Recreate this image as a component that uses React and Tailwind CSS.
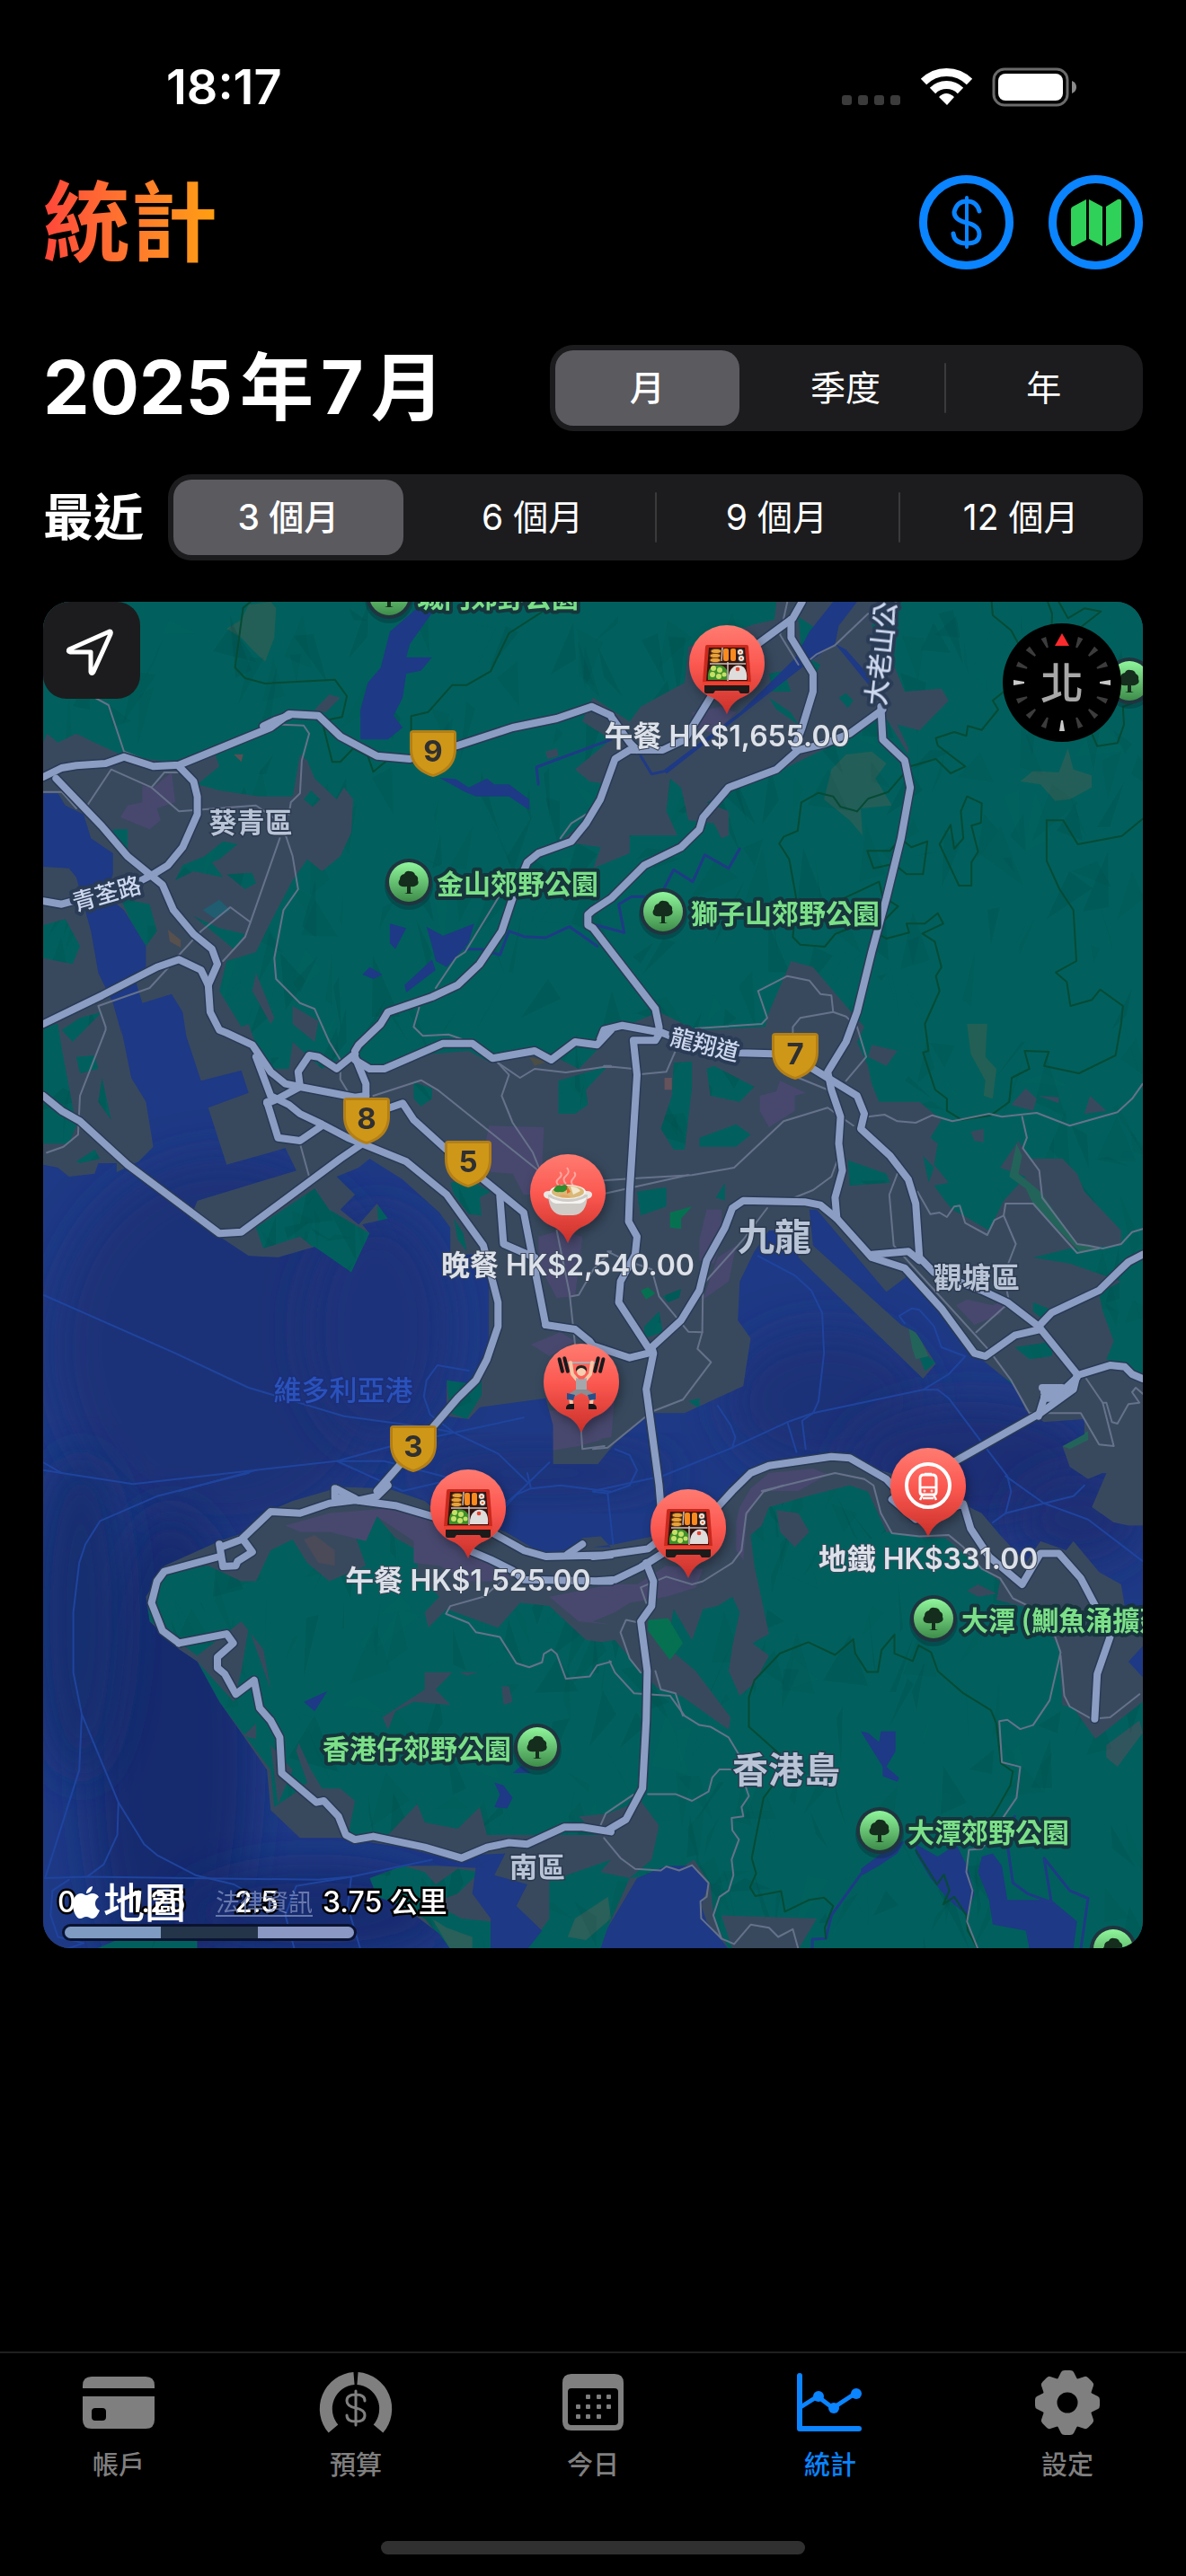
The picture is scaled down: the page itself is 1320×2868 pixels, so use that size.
import React, { useState } from "react";

/* ---------- map geometry ---------- */

// Each survey sheet has its own origin and scale; points are written in sheet units.
const SHEETS = {
  nw: [40, 660, 2.45, 3],
  ne: [660, 660, 2.45, 3],
  w: [40, 1140, 2.45, 3],
  e: [660, 1140, 2.45, 3],
  sw: [40, 1640, 2.45, 2.904],
  se: [660, 1640, 2.45, 2.904],
};

function trace(spec) {
  let sheet = SHEETS.nw;
  return spec
    .trim()
    .split(/\s+/)
    .map((token) => {
      if (SHEETS[token]) {
        sheet = SHEETS[token];
        return null;
      }
      const [x, y] = token.split(",").map(Number);
      return `${Math.round((sheet[0] + x / sheet[2]) * 10) / 10},${Math.round((sheet[1] + y / sheet[3]) * 10) / 10}`;
    })
    .filter(Boolean)
    .join(" ");
}

const HILLS = [
  "nw 20,30 ne 500,30 495,90 440,105 260,180 250,300 130,380 100,430 0,350 nw 1510,370 1490,430 1568,490 1470,590 1510,630 1560,640 1500,760 1430,830 1540,850 1520,920 ne 0,920 100,870 100,810 230,810 200,730 210,620 240,650 260,760 330,770 350,820 370,810 370,730 310,700 400,650 500,600 600,540 700,480 790,400 860,540 860,520 830,440 890,460 970,360 950,320 850,330 820,240 790,190 760,110 800,30 1499,30 e 1499,1180 1400,1120 1420,1060 1390,960 1380,900 1440,860 1300,800 1200,780 1300,750 1440,740 1440,690 1340,560 1320,500 1280,450 1190,450 1160,390 1110,480 1180,510 1120,590 1080,690 1010,640 980,620 960,590 930,540 970,530 930,470 940,400 920,380 950,320 890,260 780,260 760,200 750,140 720,60 ne 740,1450 690,1380 600,1250 540,1230 480,1400 470,1450 280,1460 180,1400 e 0,50 w 1568,40 1480,150 1400,100 1340,100 1240,130 1180,90 1080,100 960,150 900,150 870,90 780,150 700,60 690,150 640,150 600,70 580,0 nw 560,1450 500,1330 520,1230 600,1200 640,1100 700,960 740,890 780,930 830,880 860,800 865,690 840,650 820,690 760,620 740,560 720,540 700,680 610,680 500,660 440,640 500,580 470,470 530,430 600,440 640,450 680,410 400,570 240,545 160,500 110,470 60,500 30,470 20,500",
  "sw 300,470 310,400 350,320 470,300 560,350 600,350 640,250 700,215 740,290 800,350 900,300 870,200 930,140 980,210 1040,250 1040,330 1100,400 1060,450 1070,500 1120,440 1260,500 1320,420 1400,430 1500,540 1568,550 se 0,550 60,540 130,640 180,700 240,720 370,830 375,790 280,640 200,560 220,440 270,540 300,440 340,430 380,400 400,450 380,560 370,640 400,720 440,680 480,590 435,550 480,520 440,300 430,200 460,170 480,110 600,70 700,40 750,60 800,190 900,210 960,210 1050,300 1110,350 1100,410 1200,440 1270,560 1280,750 1310,760 1370,860 1499,740 1499,1540 370,1540 330,1440 320,1330 270,1240 290,1240 220,1290 100,1310 160,1250 180,1140 130,1060 20,1110 sw 1568,1100 1480,1110 1530,1170 1230,1170 1210,1080 1150,1150 1060,1130 1040,1070 960,1170 850,1180 870,1060 830,1020 780,1020 750,960 700,830 740,760 710,900 740,1000 700,1040 650,1080 640,960 500,740 440,610 540,740 560,640 580,500 640,700 620,570 560,480 440,590",
  "nw 20,1110 80,1090 120,1180 100,1240 20,1220",
  "w 20,10 60,0 70,80 110,340 90,400 20,400",
  "w 110,110 160,105 170,150 120,165",
  "w 180,180 205,320 170,260",
  "w 110,460 160,420 175,450 120,465",
  "w 760,550 800,620 910,700 860,830 760,750 720,710 620,750 600,680",
  "w 930,605 965,650 935,685",
  "w 1130,530 1180,520 1240,560 1210,580 1215,640 1180,635 1140,570",
  "w 1140,650 1165,700 1175,760 1150,720",
  "w 1120,1190 1215,1185 1215,1240 1175,1320 1130,1300",
  "w 1030,195 1080,215 1080,250 1050,275 1030,250",
  "w 1425,190 1560,140 1500,220 1505,270 1470,300 1425,300",
  "nw 510,830 550,840 500,890 480,900 510,950 430,930 380,960 400,910 460,880",
  "nw 520,940 590,935 600,970 570,990",
  "nw 730,690 750,660 775,690 755,715",
  "nw 430,1080 500,1120 570,1140 540,1190 500,1150",
  "nw 230,1020 310,1040 330,1130 300,1180 260,1100",
  "nw 70,1460 120,1420 180,1400 100,1500",
  "nw 210,790 250,790 250,860 220,850",
  "ne 480,350 540,400 560,440 500,390",
  "ne 670,350 690,335 710,360 695,385",
  "ne 560,80 610,120 560,200 620,240 600,290 570,220",
  "ne 480,270 520,260 540,330 490,330",
  "e 220,130 270,125 270,210 250,420 220,420 185,350 215,240",
  "e 310,150 330,140 440,210 400,260 320,240",
  "e 290,380 390,335 430,370 390,410 290,410",
  "e 120,560 200,545 200,610 130,640",
  "e 335,580 360,530 360,590",
  "e 695,455 800,500 810,530 700,540",
  "e 140,1010 180,960 190,1030 140,1050",
  "e 190,910 240,885 235,915 205,930",
  "e 260,1260 290,1250 290,1285",
  "e 900,440 930,480 915,530",
  "e 1200,930 1260,960 1240,1000 1200,960",
  "e 1150,1080 1260,1060 1250,1110 1190,1120",
  "e 1100,1170 1150,1200 1110,1200",
  "e 880,1080 935,1130 905,1160",
  "sw 185,240 190,200 220,165 265,190 270,215 230,240",
  "sw 910,1310 1000,1270 1060,1290 1090,1330 1150,1280 1210,1290 1150,1360 1080,1390 1160,1440 1240,1450 1240,1540 1130,1540 1060,1440 930,1370",
  "sw 1400,1320 1568,1250 se 20,1290 100,1310 40,1470 20,1540 sw 1340,1540 1400,1440",
  "sw 160,1540 190,1510 300,1470 440,1490 440,1540",
];

const WATERS = [
  "w 20,470 60,480 90,510 160,500 170,465 220,465 220,495 280,460 320,410 300,260 260,180 230,0 nw 235,1480 210,1370 170,1270 150,1130 110,950 90,920 20,915 20,670 60,670 80,710 130,740 150,820 210,870 210,940 190,1010 240,1060 300,1180 300,1250 270,1290 290,1370 370,1340 400,1400 410,1480 w 450,190 560,155 580,230 470,280 520,470 680,415 710,490 440,590 420,650 500,710 580,775 660,780 760,745 860,830 910,700 890,670 960,650 930,600 880,670 830,620 870,570 820,510 880,480 910,450 1000,520 1100,630 1130,680 1130,770 1235,770 1235,1080 1180,1200 1120,1190 1120,1310 1180,1320 1210,1280 1390,1250 1410,1340 1410,1470 1550,1470 e 0,1490 60,1400 160,1300 250,1300 410,1210 430,1050 395,990 400,860 440,760 480,690 560,690 560,780 900,1185 935,1135 880,1030 840,1005 600,740 590,620 610,620 800,895 860,840 900,900 1000,1010 1070,1130 1150,1210 1180,1290 1230,1330 1340,1320 1340,1370 1280,1410 1300,1480 1350,1520 1390,1500 se 1400,0 1360,110 1420,160 1460,170 1499,170 1499,430 1450,430 1440,360 1380,320 1310,220 1290,250 1220,220 1180,290 1110,200 1060,130 1010,100 e 1000,1590 810,1500 650,1440 500,1470 430,1500 380,1570 se 340,90 180,200 60,230 0,240 sw 1568,240 1540,205 1490,210 1470,245 1380,260 1280,190 1080,110 1060,90 960,50 830,45 700,90 620,130 600,180 500,220 350,300 300,400 310,480 390,570 440,610 500,740 560,840 630,960 640,1090 720,1180 830,1180 1000,1210 1100,1240 1280,1230 1240,1280 1100,1270 1000,1270 910,1310 930,1370 1000,1400 1100,1490 1130,1540 440,1540 440,1490 300,1470 160,1540 20,1540",
  "sw 1200,1270 1280,1230 1250,1300 1340,1330 1310,1400 1380,1480 1340,1540 1240,1540 1240,1440 1190,1360",
  "se 20,1540 40,1470 80,1390 120,1310 200,1270 270,1270 315,1330 295,1400 310,1450 370,1540",
  "se 1060,1240 1090,1230 1115,1270 1130,1380 1250,1380 1320,1450 1310,1540 1190,1540 1180,1480 1090,1460 1080,1380 1050,1290",
  "se 880,1200 940,1240 990,1200 1020,1270 1040,1360 1020,1430 970,1380 920,1310 880,1230",
  "se 730,835 750,840 780,870 785,835 825,835 825,900 800,950 835,985 830,998 790,980 790,950",
  "se 730,1280 820,1200 850,1190 830,1230 780,1270 735,1300",
  "se 1499,560 1460,610 1499,660",
  "nw 1040,50 1090,50 1020,170 1010,215 1080,215 1050,260 1010,270 1000,350 975,410 1000,450 960,490 885,490 885,390 905,300 940,250 965,130",
  "nw 1100,618 1145,622 1180,650 1230,620 1250,640 1290,640 1345,690 1345,725 1290,680 1200,680 1170,665",
  "nw 965,1105 1010,1120 980,1190 965,1170",
  "nw 1065,1115 1110,1145 1195,1105 1180,1170 1120,1250 1090,1230 1080,1180",
  "nw 1080,1225 1090,1260 1010,1335 1005,1310",
  "nw 890,1275 910,1250 945,1275 920,1290",
  "ne 655,30 720,30 670,110 660,170 590,230 200,605 195,590 400,400 550,220 590,130",
  "ne 660,170 690,190 770,300 760,320",
  "sw 730,740 795,705 760,770",
  "sw 1250,1000 1275,1010 1300,1050 1285,1085 1250,1080 1265,1040",
  "sw 1300,970 1325,945 1350,970",
];

const PURPLES = [
  "nw 290,645 320,650 370,600 380,700 330,720 340,760 310,790 230,750 250,710 290,700",
  "w 1235,340 1385,345 1380,480 1370,570 1330,570 1300,500 1240,495 1220,440",
  "w 1370,710 1430,690 1490,710 1470,910 1420,915 1370,800",
  "w 1350,1070 1430,1030 1470,1060 1400,1110",
  "w 1390,1290 1568,1300 1540,1390 1480,1410 1430,1420 1340,1440 1345,1425 1410,1400",
  "e 455,240 500,225 510,190 580,230 550,240 550,290 480,345 455,290",
  "e 310,620 350,620 350,720 330,800 290,790 290,720",
  "e 340,780 390,740 370,860 300,920",
  "e 0,1300 60,1230 50,1380 0,1390",
  "e 480,1500 600,1485 640,1505 560,1560 430,1560",
  "e 990,940 1020,920 1090,940 1130,920 1110,970 1040,1005",
  "sw 680,170 800,130 1000,110 1080,150 1200,270 1300,340 1250,350 1180,350 1100,300 1030,290 1030,220 930,140 900,220 800,190 720,190",
  "sw 1400,400 1568,360 se 120,360 200,300 300,310 280,370 200,400 100,420 60,450 0,480 sw 1568,490 1480,480",
  "se 390,160 400,110 430,50 480,0 640,0 460,60 420,140 410,280 390,250",
  "ne 270,400 350,380 390,400 330,470 280,450",
];

const BROWNS = [
  ["nw 580,40 640,30 655,50 650,150 625,230 590,190 560,150 520,120 560,90", "#235f56"],
  ["ne 690,540 760,530 800,570 770,620 815,710 730,720 735,810 700,760 630,690 650,590", "#235f58"],
  ["ne 1295,520 1310,590 1360,610 1360,650 1300,690 1260,695 1220,640 1165,630 1200,595 1270,600", "#235f58"],
  ["e 1020,0 1075,0 1070,110 1100,150 1090,250 1065,240 1070,190 1030,100", "#235f55"],
  ["e 1155,400 1170,440 1160,500 1220,560 1320,735 1380,750 1330,765 1200,600 1180,550 1135,510", "#23645a"],
  ["e 860,1010 890,1045 915,1110 880,1120 870,1080", "#23645a"],
  ["e 1280,1410 1350,1360 1350,1390 1300,1420", "#23645a"],
  ["se 150,475 205,470 245,550 210,605 150,510", "#067150"],
  ["e 210,630 270,610 240,650 240,685 210,680", "#067150"],
  ["e 130,890 150,880 170,900 145,920", "#067150"],
  ["sw 1450,1500 1470,1440 1560,1370 1568,1440 1500,1510", "#2a5f5a"],
  ["sw 1080,1440 1120,1470 1190,1500 1190,1540 1130,1540", "#2a5f5a"],
  ["sw 730,215 760,200 815,250 815,300 770,290", "#4a4a58"],
  ["nw 360,1125 395,1160 395,1185 365,1165", "#57504d"],
  ["nw 540,540 565,540 560,565", "#5d4e55"],
  ["nw 455,1060 500,1025 530,1060 490,1090", "#205d70"],
  ["w 1345,110 1395,125 1360,140", "#4c4d45"],
  ["e 195,180 215,180 215,220 195,220", "#65525a"],
  ["se 460,1485 490,1490 520,1540 500,1540", "#686a62"],
  ["se 1490,800 1499,840 1430,950 1400,920 1400,880", "#31555d"],
];

const URBAN_SPOTS = [
  "nw 760,390 800,340 830,350 790,400",
  "nw 1390,530 1420,520 1425,545 1395,555",
  "e 1140,270 1180,215 1210,250 1200,290",
  "e 1340,300 1355,240 1400,290",
  "e 1215,240 1270,245 1270,265",
  "e 1030,360 1065,350 1065,395 1040,390",
  "sw 945,790 1060,700 1060,645 1135,645 1090,700 1130,750 1030,740 980,770 960,830",
  "sw 1270,690 1290,690 1300,740 1275,750",
  "sw 565,850 600,810 600,860",
  "sw 640,880 700,960 660,1070",
  "sw 1155,645 1205,645 1175,655",
  "se 500,120 560,130 590,190 550,240 510,190",
  "se 1020,380 1050,360 1100,390 1050,400",
  "nw 600,1270 650,1420 640,1440 590,1330",
  "nw 700,1380 770,1430 760,1500 700,1440",
  "e 760,70 830,90 800,140 750,110",
  "se 350,1430 610,1440 560,1540 380,1540",
];

const MAJOR_ROADS = [
  "nw 20,615 70,585 110,577 190,570 240,548 320,580 390,575 640,450 690,405 770,410 830,480 930,545 1020,555 1150,510 1300,450 1420,420 1515,380 1568,410 ne 50,415 100,500 120,525",
  "nw 620,445 655,425 690,410",
  "nw 55,620 180,780 250,880 310,940 345,975 375,1060 430,1140 480,1190 495,1240 470,1310 475,1400 500,1460 w 520,30 590,70 640,160 680,200 720,210 870,245 900,240",
  "nw 390,580 430,630 440,680 440,740 400,850 360,910 320,940 280,965",
  "nw 20,1030 70,1040 100,1030",
  "nw 20,1440 180,1345 330,1250 390,1225 450,1260 470,1310",
  "w 870,90 880,70 940,0 nw 960,1400 1080,1350 1150,1310 1210,1240 1270,1130 1300,1020 1340,900 1370,870 1460,830 1500,770 ne 20,690 60,555 100,525 190,525 250,490 340,310 450,170 545,85 570,30",
  "ne 540,90 540,150 600,270 600,330 570,450 550,515",
  "ne 790,390 700,470 630,505 560,525 500,590 370,650 300,750 290,790 240,850 140,910 50,1020 0,1060 nw 1505,1075 1505,1110 ne 0,1120 170,1390 180,1450 e 180,30",
  "ne 785,380 790,490 850,560 865,650 840,820 800,1020 760,1200 720,1400 e 690,60 640,160 650,220 675,310 670,400 680,490 660,580 665,650 760,780 850,815 950,950 1040,1100 1070,1110 1150,1040 1220,1020",
  "w 870,120 910,150 950,150 1110,65 1190,65 1245,115 1360,90 1405,120 1470,60 1530,70 1568,20 e 20,50 30,20 80,5 190,30 220,45",
  "e 220,50 300,75 400,97 490,100 600,150 720,240 740,300 730,350 810,440 860,520 880,600 890,780 930,830 1060,890 1130,930 1215,1010 1320,1170 1310,1220 1220,1300 960,1480",
  "e 760,770 860,760 890,790",
  "e 1215,1010 1250,965 1380,890 1430,830 1460,795 1499,770",
  "e 1330,1170 1410,1140 1450,1145 1470,1170 1499,1185",
  "e 1320,1180 1260,1250 1230,1250 1215,1310",
  "e 180,35 170,55 110,55 120,170 105,460 100,560 97,660 120,710 115,770 75,860 70,930 150,1080",
  "w 1390,1005 1470,1020 1510,1060 e 0,1075 100,1115 150,1100 160,1080 240,990 290,890 310,790 360,680 380,615 410,590 580,595 620,605 665,650",
  "e 160,1080 165,1100 145,1220 180,1540 se 185,110",
  "w 20,240 70,290 120,325 250,470 500,700 560,695 830,450 890,400",
  "w 900,240 900,200 870,110",
  "w 720,210 715,160 745,105 770,110 820,150 870,100",
  "w 600,110 640,240 690,270 720,300 780,335 850,380 1010,460 1120,570 1220,740 1260,930 1260,1010 1230,1120 1200,1190 1150,1250 1080,1350 930,1560 sw 960,40 930,75 880,88",
  "w 630,260 660,380 720,390 780,340",
  "w 630,265 660,250 720,210",
  "w 965,280 1000,265 1030,320 1120,420 1260,560 1330,630 1390,1005",
  "w 1265,575 1275,735 1360,780",
  "sw 390,550 345,510 315,420 330,350 350,318 500,270",
  "sw 505,240 560,215 640,125 720,130 800,98 870,88 980,105 1080,140 1240,190 1330,250 1390,270 1568,265 se 0,270 150,245 200,200 340,110 e 380,1560 430,1500 480,1475 650,1445 700,1450 800,1520 830,1560",
  "sw 500,230 510,302 545,300 550,285 590,255 565,215",
  "sw 815,50 815,80 880,88",
  "sw 820,52 870,82",
  "sw 1490,230 1450,262",
  "sw 1190,255 1240,280 1300,315 1330,345 1568,350 se 0,350 60,345 130,305 190,260",
  "sw 390,550 520,520 538,550 495,595 495,630 515,650 545,715 595,670 610,760 640,800 665,855 670,970 765,1065 785,1060 825,1110 845,1170 870,1185 920,1175 1060,1210 1160,1245 1230,1210 1290,1195 1340,1200 1440,1145 1490,1145 1568,1160 se 40,1155 90,1120 135,1020 145,800 148,640 130,480 160,430 165,350 145,290",
  "se 815,85 880,150 1010,100 1030,180 1080,270 1170,360 1220,260 1270,260 1330,340 1370,430 1410,530 1375,650 1368,795",
];

const MINOR_ROADS = [
  "nw 160,350 198,375 240,530 320,570",
  "nw 140,710 205,590 315,650 390,730 600,710 670,770 700,880 715,990 675,1060 650,1220 655,1290 720,1370 760,1390 800,1500 w 830,120 830,185 850,225",
  "nw 315,650 350,600 390,600",
  "nw 670,440 730,443 745,470 725,560 720,670 695,700 690,740",
  "nw 665,820 585,1100 570,1150 510,1230",
  "nw 390,1210 450,1130 530,1050 585,1100",
  "nw 20,665 70,665 110,720",
  "nw 370,1240 310,1320 170,1380 190,1450 w 190,20 120,240 115,370 75,410 30,430",
  "nw 1500,740 1460,770 1430,820",
  "nw 1270,1000 1170,1200 1145,1220 1090,1320",
  "nw 1045,1385 1030,1450 1055,1480 1125,1475 1160,1490",
  "w 920,240 1050,188 1095,220 1370,490",
  "w 1260,130 1290,170 1270,240 1300,330 1355,430 1375,490",
  "w 1260,130 1320,180 1360,150 1445,162 1568,140 e 30,140 110,150",
  "w 720,400 745,510",
  "w 1420,690 1455,900 1470,1070 1490,1420 1550,1410",
  "w 1460,910 1480,905 1520,820 1568,760 e 40,760 90,790 160,820 180,910 260,1028 298,1030 300,870 410,720 475,615",
  "e 298,1030 285,1085 322,1130 245,1255 160,1295 40,1415 0,1420",
  "e 0,525 120,515 270,505 385,480 520,325 640,280 710,340",
  "e 0,575 260,505",
  "e 560,180 640,220",
  "e 690,190 745,110 720,10 ne 690,1415 655,1400 650,1345 620,1340 590,1295 530,1280 450,1330 475,1420 460,1440 280,1455",
  "ne 655,1400 565,1420 545,1450 545,1500",
  "e 130,168 200,160 225,90",
  "e 750,310 795,303 830,325 880,330 925,305 980,325 1080,300 1115,310 1210,297 1300,340 1430,295 1470,250 1499,200",
  "e 1170,310 1183,380 1172,415 1217,490 1225,580 1320,735 1350,740 1390,750 1440,735 1470,695 1499,685",
  "e 550,580 600,555 650,510 665,460",
  "e 830,500 808,570 820,740 1080,1090 1140,1190 1190,1300 1330,1300 1380,1405 1420,1410 1390,1265 1400,1265 1415,1330 1430,1335 1460,1270 1490,1265 1470,1230 1480,1215 1499,1235",
  "e 1345,1185 1390,1265",
  "e 885,560 920,635 945,630 965,645 985,610 1000,607 1015,665 1075,705 1095,655 1120,640 1125,600 1200,600 1320,765 1380,750",
  "e 1120,640 1153,735 1120,840 1135,930 1045,1030",
  "ne 530,30 510,140 560,240",
  "ne 590,225 610,205 660,175 750,70",
  "e 460,1560 660,1500 740,1520 se 765,40 785,130 815,195 890,205 970,200 1010,240 1060,310 1110,340 1145,405 1240,460 1275,580 1245,735 1200,815 1165,828 1130,798 1108,802 1115,935 1165,950 1155,1050 1060,1215 1025,1218 1018,1290 1035,1350 1020,1450 1050,1540",
  "se 1275,590 1285,720 1300,755 1360,795 1410,790 1490,715",
  "se 520,40 465,60 418,130 405,250 380,290 300,350 270,360 200,335 130,370 145,420",
  "sw 1270,350 1220,400 1130,430 1118,455 1180,485 1200,515 1265,530 1310,615 1345,628 1380,612 1385,585 1405,570 1420,585 1445,665 1510,658 1530,622 1568,610 se 45,608 60,645 112,712 210,720 250,785 290,815 320,820 370,855 400,915 415,1010 425,1045 405,1080 410,1110 378,1115 380,1155 398,1185 378,1250 383,1300 370,1350 345,1370 328,1430 350,1505 385,1523 430,1460 480,1470 505,1500 545,1475 560,1540",
  "se 130,645 100,600 75,515 90,475 130,485",
  "se 170,640 185,700 225,712 245,785",
  "se 150,1038 225,1038 270,1060 315,1030 325,985 345,958 380,958",
  "se 110,1040 35,1100 20,1140",
  "se 30,1180 75,1245 115,1280 185,1285 200,1272 235,1285 270,1268 315,1325 310,1370 293,1385 295,1440 350,1505",
];

const FERRY_LANES = [
  "w 20,905 380,1100 580,1215 840,1310 1080,1350 1140,1365 1330,1315",
  "w 1180,1158 1095,1140 1065,1190 1058,1245 1075,1305 1140,1365 1260,1435 1340,1530",
  "w 20,1490 70,1500 265,1537 600,1490 820,1460 970,1410 1140,1365",
  "w 390,1560 600,1490",
  "w 820,1460 950,1460 1140,1520 1000,1560 820,1460",
  "w 20,1465 70,1500",
  "w 1400,1465 1320,1560 sw 1240,140",
  "e 450,775 550,840 595,890 625,965 630,1100 615,1260 600,1300 900,1222 970,1170 1015,1110 950,1080 930,1010 890,955 870,950 835,975 850,1000",
  "e 600,1300 530,1330 380,1415 190,1510 0,1560",
  "e 340,1275 375,1340 388,1380 380,1415",
  "e 530,1330 555,1430",
  "e 600,1300 570,1325 580,1420",
  "e 900,1222 940,1222 970,1250 1080,1430 1130,1510 se 1140,60 1125,130 1090,160",
  "e 60,1420 100,1440 120,1490 se 100,40 40,65 0,60",
  "se 40,65 55,230",
  "se 1125,10 1230,98 1350,150 1499,285",
  "se 1125,130 1230,98 1310,75 1340,40",
  "sw 580,0 330,75 175,155 135,230 118,290 102,450 102,645 125,780 118,960 25,1310",
  "sw 125,780 225,1065 295,1200 330,1235 435,1300 540,1330 600,1370 640,1420",
  "sw 225,1065 222,1170 185,1265 140,1305",
  "sw 25,1310 140,1305 770,1315 860,1305 1080,1250",
  "sw 860,1305 850,1400 885,1540",
  "sw 860,1305 710,1335 680,1430 705,1540",
  "sw 90,1315 45,1350 40,1430 60,1500 130,1520 80,1540",
  "sw 1340,0 1350,50 1310,70 1280,110",
  "sw 1350,50 1430,40 1568,60",
];

const STREAMS = [
  "nw 1568,490 1365,582 1370,640",
  "nw 1170,1190 1215,1190 1265,1210 1290,1130 1330,1148 1390,1152 1455,1115 1530,1180",
  "ne 400,855 370,920 305,875 272,965 220,925 195,985",
  "ne 140,1015 105,1015 70,1040 85,1135 10,1110",
  "ne 130,545 160,605 200,595",
  "se 735,1290 650,1430 635,1505 598,1507 598,1540",
  "se 1150,1110 1130,1200 1145,1325 1185,1360 1250,1388 1230,1245 1300,1350 1350,1375 1330,1540",
];

const PARK_BORDERS = [
  "nw 585,30 565,50 543,250 570,285 625,303 815,290 848,345 835,415 780,428 808,565 830,565 865,520 905,545 920,598 965,552 1020,548",
  "nw 1385,60 1290,135 1240,262 1175,308 1135,308 1070,398 1023,412 1023,460",
  "ne 720,730 675,715 655,680 615,668 568,700 558,795 520,815 508,838 535,890 555,1025 545,1150 565,1175 632,1182 660,1140 760,1090",
  "ne 720,730 750,688 805,665 865,580 935,555 975,603 1015,580 940,510 935,485 985,465 1018,478 1022,445 1060,458 1105,390 1090,360 1130,320",
  "ne 1087,30 1090,75 1140,125 1160,170",
  "ne 1240,30 1252,70 1250,130",
  "ne 1270,30 1295,85 1340,52 1385,62 1330,115",
  "ne 810,862 748,862 765,920 820,905 855,940 900,940 912,830 868,850 838,820 810,862",
  "ne 975,775 985,855 1010,820 1003,730 1020,680 1060,703 1058,768 1032,778 1050,865 1032,900 1032,978 998,978 945,840 975,775",
  "ne 650,1040 780,965 790,1015 832,1047 765,1130 800,1155 862,1135 855,1105 905,1105 940,1070 955,1105 898,1138 932,1165 950,1250 935,1280 945,1330 905,1440 e 915,90 900,95 933,220 965,250 965,290 1005,320 1085,305 1135,260 1142,180 1190,150 1177,90 1243,93 1230,140 1325,165 1425,105 1440,0 ne 1445,1380 1383,1325 1360,1360 1302,1380 1292,1300 1262,1268 1318,1230 1310,1060 1272,990 1237,895 1237,760 1282,760 1322,840 1442,812 1499,755",
  "ne 1360,470 1375,512 1430,502 1448,440 1445,380 1470,370",
  "se 510,910 425,820 425,725 440,670 510,583 587,547 660,588 710,537 715,583 747,643 777,643 787,572 822,522 822,583 872,608 888,557 922,580 940,640 1010,712 1085,767 1100,810 1112,938 1145,965 1138,1010 1095,1100 1060,1150",
  "se 490,1010 465,1050 433,1245 445,1295 428,1340 443,1368 513,1352 523,1418 590,1380 630,1373 655,1400 632,1470 635,1505",
  "se 880,1220 938,1330 957,1298 972,1350 955,1395 985,1370 1018,1430 1022,1480 1050,1540",
];

const DEPTHS = [
  { cx: 250, cy: 1500, rx: 190, ry: 210, fill: "#1c3078" },
  { cx: 420, cy: 1480, rx: 80, ry: 130, fill: "#1c307a" },
  { cx: 190, cy: 1960, rx: 90, ry: 280, fill: "#172b6e" },
  { cx: 90, cy: 1800, rx: 50, ry: 180, fill: "#182d70" },
  { cx: 920, cy: 1560, rx: 110, ry: 80, fill: "#1b3078" },
  { cx: 1080, cy: 1630, rx: 140, ry: 70, fill: "#1a2e75" },
  { cx: 1200, cy: 1690, rx: 70, ry: 50, fill: "#1a2e75" },
  { cx: 600, cy: 1640, rx: 150, ry: 25, fill: "#1b3078" },
  { cx: 350, cy: 2130, rx: 150, ry: 50, fill: "#182c70" },
];

// Deterministic slivers of shade that give the hills their faceted relief.
const FACETS = (() => {
  let seed = 20257;
  const rand = () => {
    seed = (seed * 1103515245 + 12345) % 2147483648;
    return seed / 2147483648;
  };
  return Array.from({ length: 950 }, () => {
    const x = Math.round(48 + rand() * 1224);
    const y = Math.round(670 + rand() * 1500);
    const near = () => Math.round((rand() - 0.5) * 60);
    const far = () => Math.round(rand() * 70);
    return {
      points: `${x},${y} ${x + near()},${y + far()} ${x + near()},${y + far()}`,
      light: rand() > 0.8,
      opacity: Math.round((0.04 + rand() * 0.08) * 100) / 100,
    };
  });
})();

const CJK = '"Noto Sans CJK TC", sans-serif';
const LATIN = 'Inter, "Noto Sans CJK TC", sans-serif';

const PLACES = [
  { text: "葵青區", x: 279, y: 913, size: 31 },
  { text: "九龍", x: 862, y: 1374, size: 41 },
  { text: "觀塘區", x: 1087, y: 1420, size: 32 },
  { text: "香港島", x: 875, y: 1968, size: 40 },
  { text: "南區", x: 598, y: 2076, size: 31 },
];

const STREETS = [
  { text: "青荃路", x: 118, y: 993, size: 26, turn: -16 },
  { text: "龍翔道", x: 785, y: 1161, size: 26, turn: 14 },
  { text: "大老山公路", x: 980, y: 713, size: 29, turn: -84 },
];

const PARKS = [
  { text: "城門郊野公園", x: 433, y: 663, anchor: "start" },
  { text: "金山郊野公園", x: 455, y: 982, anchor: "start" },
  { text: "獅子山郊野公園", x: 738, y: 1015, anchor: "start" },
  { text: "大潭 (鰂魚涌擴建部分)", x: 1039, y: 1802, anchor: "start" },
  { text: "香港仔郊野公園", x: 598, y: 1945, anchor: "end" },
  { text: "大潭郊野公園", x: 979, y: 2038, anchor: "start" },
  { text: "", x: 1257, y: 758, anchor: "start" },
  { text: "", x: 1239, y: 2170, anchor: "start" },
];

const SHIELDS = [
  { text: "9", x: 482, y: 839 },
  { text: "7", x: 885, y: 1176 },
  { text: "8", x: 408, y: 1248 },
  { text: "5", x: 521, y: 1296 },
  { text: "3", x: 460, y: 1613 },
];

const PINS = [
  { x: 809, y: 738, icon: "bento", label: "午餐 HK$1,655.00" },
  { x: 632, y: 1327, icon: "stew", label: "晚餐 HK$2,540.00" },
  { x: 647, y: 1538, icon: "gym", label: "" },
  { x: 521, y: 1678, icon: "bento", label: "午餐 HK$1,525.00" },
  { x: 766, y: 1700, icon: "bento", label: "" },
  { x: 1033, y: 1654, icon: "metro", label: "地鐵 HK$331.00" },
];

/* ---------- map pieces ---------- */

function Bento() {
  return (
    <g>
      <path d="M-25 21h50v8q0 2-2 2h-8l-2-3h-26l-2 3h-8q-2 0-2-2z" fill="#1d1a1a" />
      <path d="M-22-23h44q2 0 2 2l3 40q0 2-2 2h-50q-2 0-2-2l3-40q0-2 2-2z" fill="#c9281c" />
      <path d="M-20-20h40l3 37h-46z" fill="#33140f" />
      <path d="M-19-2h40M-5-20l-1 15M1-4v21" stroke="#c9c4c4" strokeWidth="1.5" />
      <g fill="#e8a33c" stroke="#7a4310" strokeWidth="1">
        <ellipse cx="-12" cy="-16" rx="6" ry="2.6" />
        <ellipse cx="-13" cy="-11" rx="6" ry="2.6" />
        <ellipse cx="-13" cy="-6" rx="6" ry="2.6" />
      </g>
      <g fill="#f98a1e">
        <rect x="-4" y="-19" width="6" height="14" rx="2" />
        <rect x="4" y="-19" width="6" height="14" rx="2" />
      </g>
      <g fill="#f2eee8" stroke="#3b3b3b" strokeWidth="1.2">
        <circle cx="15" cy="-15" r="3.6" />
        <circle cx="16" cy="-8" r="3.6" />
      </g>
      <g fill="#f06a30">
        <circle cx="15" cy="-15" r="1.3" />
        <circle cx="16" cy="-8" r="1.3" />
      </g>
      <path d="M-21 16q-1-14 7-16q10-2 14 5v11h-18z" fill="#3f8f2a" />
      <g fill="#c6e067">
        <circle cx="-15" cy="3" r="3" />
        <circle cx="-8" cy="5" r="3" />
        <circle cx="-16" cy="10" r="3" />
        <circle cx="-9" cy="12" r="3" />
        <circle cx="-3" cy="10" r="2.5" />
      </g>
      <path d="M2 16q-1-10 6-15q6-3 11 1q4 5 3 14z" fill="#dfdcdc" />
      <circle cx="12" cy="4" r="2.3" fill="#e8402c" />
      <path d="M-27 18h54v4h-54z" fill="#ef4030" />
    </g>
  );
}

function Stew() {
  return (
    <g>
      <path d="M-10-10q-5-4 0-8t1-7M-2-12q-5-5 0-9t1-9M6-10q-4-4 0-8t1-7" fill="none" stroke="#ffd9d5" strokeWidth="2" opacity="0.55" />
      <path d="M-27 0q0-4 6-4h42q6 0 6 4t-6 5h-42q-6-1-6-5z" fill="#e9e7e3" />
      <path d="M-22 0h44q-1 22-16 23h-12q-15-1-16-23z" fill="#cfccc8" />
      <path d="M-21 3q21 10 42 0q-2 6-8 7h-26q-6-1-8-7z" fill="#f5f4f1" />
      <ellipse cx="0" cy="-3" rx="20" ry="8" fill="#f4f2ee" />
      <ellipse cx="0" cy="-3" rx="18" ry="7" fill="#d9b978" />
      <path d="M-16-5q3-7 9-5q6-3 7 3q-3 5-9 4q-5 1-7-2z" fill="#2f8b2d" />
      <path d="M-1-10l4 7-4 2z" fill="#f0672a" />
      <path d="M3-9q8 0 11 5l-8 4z" fill="#f2e8cf" />
      <path d="M-10 1q8-3 14 2h-10z" fill="#e4a565" />
    </g>
  );
}

function Lifter() {
  return (
    <g>
      <path d="M-16-24h32" stroke="#a9adb3" strokeWidth="2" />
      <g fill="#17191c">
        <rect x="-25" y="-30" width="4" height="18" rx="2" transform="rotate(-14 -23 -22)" />
        <rect x="-19" y="-31" width="4" height="19" rx="2" transform="rotate(-14 -17 -22)" />
        <rect x="21" y="-30" width="4" height="18" rx="2" transform="rotate(14 23 -22)" />
        <rect x="15" y="-31" width="4" height="19" rx="2" transform="rotate(14 17 -22)" />
      </g>
      <path d="M-12-24l2 13 5 6M12-24l-2 13-5 6" fill="none" stroke="#f3c9a8" strokeWidth="4" strokeLinecap="round" />
      <circle cx="0" cy="-14" r="5" fill="#f6d0b1" />
      <path d="M-6-14q-1-7 6-7t6 7q-3-4-6-4t-6 4z" fill="#2a211e" />
      <path d="M-6-7q6 3 12 0v16h-12z" fill="#a5a7ab" />
      <path d="M-6 6h12l7 4-3 5-10-5-10 5-3-5z" fill="#8b8d92" />
      <path d="M-12 14l1 8M12 14l-1 8" stroke="#f3c9a8" strokeWidth="4" />
      <path d="M-16 10l9 2-2 6-7-1zM16 10l-9 2 2 6 7-1z" fill="#27508a" />
      <path d="M-17 26q1-4 5-4h4v6h-9zM17 26q-1-4-5-4h-4v6h9z" fill="#15171a" />
    </g>
  );
}

function Metro() {
  return (
    <g fill="none" stroke="#fff">
      <circle r="24" strokeWidth="4" />
      <path d="M-9 7v-15q0-4 4-4h10q4 0 4 4v15q0 3-3 3h-12q-3 0-3-3z" strokeWidth="3" />
      <path d="M-4-13h8M-8 2h16M-6 10l-3 6M6 10l3 6M-6 14h12" strokeWidth="2.5" />
      <circle cx="-4" cy="6" r="1" />
      <circle cx="4" cy="6" r="1" />
    </g>
  );
}

const PIN_ART = { bento: Bento, stew: Stew, gym: Lifter, metro: Metro };

function Pin({ x, y, icon, label }) {
  const Art = PIN_ART[icon];
  return (
    <g transform={`translate(${x} ${y})`}>
      <g filter="url(#pinShadow)">
        <path
          d="M0-42a42 42 0 0 1 42 42c0 19-11 32-24 38-10 4-14 10-18 19-4-9-8-15-18-19C-31 32-42 19-42 0a42 42 0 0 1 42-42z"
          fill="url(#pinFill)"
        />
      </g>
      <g transform={icon === "metro" ? "translate(0 0)" : "translate(0 3)"}>
        <Art />
      </g>
      {label && (
        <text y="81" fontFamily={LATIN} fontSize="32" fontWeight="600" fill="#dde2ea" stroke="#3b4658" strokeWidth="2" paintOrder="stroke" textAnchor="middle" dominantBaseline="central">
          {label}
        </text>
      )}
    </g>
  );
}

function Park({ text, x, y, anchor }) {
  return (
    <g>
      <g transform={`translate(${x} ${y})`}>
        <circle cy="4" r="27" fill="#0b2c33" opacity="0.35" />
        <circle r="26" fill="#20343f" />
        <circle r="22" fill="url(#parkFill)" />
        <path d="M-2 12v-7q-5 1-8-1-3-3 0-7 0-5 5-6 2-4 6-3 5 0 6 4 4 2 3 6 2 4-2 6-3 2-6 1v7l3 1h-10z" fill="#152d1c" />
      </g>
      {text && (
        <text
          x={anchor === "start" ? x + 31 : x - 29}
          y={y}
          fontFamily={CJK}
          fontSize="30"
          fontWeight="700"
          fill="#7be087"
          stroke="#16353c"
          strokeWidth="8"
          strokeLinejoin="round"
          paintOrder="stroke"
          textAnchor={anchor}
          dominantBaseline="central"
        >
          {text}
        </text>
      )}
    </g>
  );
}

function Shield({ text, x, y }) {
  return (
    <g transform={`translate(${x} ${y})`}>
      <path d="M-22-26h44q4 0 4 4v17c0 17-11 27-26 31c-15-4-26-14-26-31v-17q0-4 4-4z" fill="#b37f16" />
      <path d="M-23-23h46v18c0 15-10 24-23 28c-13-4-23-13-23-28z" fill="#cf9718" />
      <text y="-3" fontFamily={LATIN} fontSize="33" fontWeight="700" fill="#2f3032" textAnchor="middle" dominantBaseline="central">
        {text}
      </text>
    </g>
  );
}

function MapCanvas() {
  const hills = HILLS.map(trace);
  const waters = WATERS.map(trace);
  const majors = MAJOR_ROADS.map(trace);
  return (
    <svg viewBox="48 670 1224 1499" preserveAspectRatio="xMidYMid slice" className="block h-full w-full" role="img" aria-label="香港消費地圖">
      <defs>
        <linearGradient id="pinFill" x1="0" y1="0" x2="0" y2="1">
          <stop offset="0" stopColor="#ff7b71" />
          <stop offset="0.45" stopColor="#fb5850" />
          <stop offset="1" stopColor="#c92f28" />
        </linearGradient>
        <linearGradient id="parkFill" x1="0" y1="0" x2="0" y2="1">
          <stop offset="0" stopColor="#8ff69b" />
          <stop offset="1" stopColor="#3d8c49" />
        </linearGradient>
        <filter id="pinShadow" x="-30%" y="-30%" width="170%" height="170%">
          <feDropShadow dx="3" dy="5" stdDeviation="6" floodColor="#000" floodOpacity="0.35" />
        </filter>
        <filter id="soft" x="-40%" y="-40%" width="180%" height="180%">
          <feGaussianBlur stdDeviation="24" />
        </filter>
        <clipPath id="hillClip">
          {hills.map((p) => (
            <polygon key={p} points={p} />
          ))}
        </clipPath>
        <clipPath id="seaClip">
          <polygon points={waters[0]} />
        </clipPath>
      </defs>

      <rect x="48" y="670" width="1224" height="1499" fill="#38495e" />
      {hills.map((p) => (
        <polygon key={p} points={p} fill="#01605d" />
      ))}
      {BROWNS.map(([p, fill]) => (
        <polygon key={p} points={trace(p)} fill={fill} />
      ))}
      <g clipPath="url(#hillClip)">
        {FACETS.map((f, i) => (
          <polygon key={i} points={f.points} fill={f.light ? "#0b6a64" : "#00302f"} opacity={f.opacity} />
        ))}
      </g>
      {URBAN_SPOTS.map((p) => (
        <polygon key={p} points={trace(p)} fill="#38495e" />
      ))}
      {PURPLES.map((p) => (
        <polygon key={p} points={trace(p)} fill="#48486e" />
      ))}
      {waters.map((p) => (
        <polygon key={p} points={p} fill="#1e3985" />
      ))}
      <g clipPath="url(#seaClip)">
        {DEPTHS.map((d) => (
          <ellipse key={`${d.cx}-${d.cy}`} {...d} filter="url(#soft)" />
        ))}
      </g>
      <g fill="none" strokeLinejoin="round" strokeLinecap="round">
        {FERRY_LANES.map((p) => (
          <polyline key={p} points={trace(p)} stroke="#1f449e" strokeWidth="2" />
        ))}
        {STREAMS.map((p) => (
          <polyline key={p} points={trace(p)} stroke="#1f3a86" strokeWidth="3" />
        ))}
        {PARK_BORDERS.map((p) => (
          <polyline key={p} points={trace(p)} stroke="#064b35" strokeWidth="2" />
        ))}
        {MINOR_ROADS.map((p) => (
          <polyline key={p} points={trace(p)} stroke="#66728a" strokeWidth="2" />
        ))}
        {majors.map((p) => (
          <polyline key={p} points={p} stroke="#283a55" strokeWidth="11" />
        ))}
        {majors.map((p) => (
          <polyline key={p} points={p} stroke="#8c9dc3" strokeWidth="8" />
        ))}
        <path d="M1160 1545h22M1162 1550h18M1162 1555h14" stroke="#8c9dc3" strokeWidth="8" />
      </g>

      {STREETS.map((s) => (
        <g key={s.text} transform={`translate(${s.x} ${s.y}) rotate(${s.turn})`}>
          <text fontFamily={CJK} fontSize={s.size} fontWeight="500" fill="#cdd8ee" stroke="#2a3b56" strokeWidth="8" strokeLinejoin="round" paintOrder="stroke" textAnchor="middle" dominantBaseline="central">
            {s.text}
          </text>
        </g>
      ))}
      <text x="382" y="1545" fontFamily={CJK} fontSize="31" fontWeight="500" fill="#2a52bd" stroke="#1c2f78" strokeWidth="3" paintOrder="stroke" textAnchor="middle" dominantBaseline="central">
        維多利亞港
      </text>
      {SHIELDS.map((s) => (
        <Shield key={s.text} {...s} />
      ))}
      {PARKS.map((p) => (
        <Park key={`${p.x}-${p.y}`} {...p} />
      ))}
      {PLACES.map((p) => (
        <text key={p.text} x={p.x} y={p.y} fontFamily={CJK} fontSize={p.size} fontWeight="700" fill="#b9c4d7" stroke="#2c3a50" strokeWidth="3" paintOrder="stroke" textAnchor="middle" dominantBaseline="central">
          {p.text}
        </text>
      ))}
      {PINS.map((p) => (
        <Pin key={`${p.x}-${p.y}`} {...p} />
      ))}
    </svg>
  );
}

const TICKS = Array.from({ length: 15 }, (_, i) => (i + 1) * 22.5);

function Compass() {
  return (
    <button type="button" aria-label="指北針" className="absolute top-6 right-6 size-[132px]">
      <svg viewBox="-66 -66 132 132" className="size-full">
        <circle r="66" fill="#000" />
        {TICKS.map((a) => (
          <path key={a} d="M-3-54h6l-2 12h-2z" transform={`rotate(${a})`} fill={a % 90 === 0 ? "#c8c8c8" : "#3c3c3c"} />
        ))}
        <path d="M0-55l8 14h-16z" fill="#fb2a2c" />
        <text y="-3" fontFamily={CJK} fontSize="48" fontWeight="500" fill="#a8a8a8" textAnchor="middle" dominantBaseline="central">
          北
        </text>
      </svg>
    </button>
  );
}

const OUTLINE = "[paint-order:stroke] [-webkit-text-stroke:5px_#000]";

function MapFooter() {
  return (
    <div className="absolute bottom-2 left-3 text-white">
      <div className="relative h-12 w-[480px]">
        <ol className="flex h-full items-center pl-1 text-[32px] leading-none font-medium" aria-label="比例尺">
          <li className={`w-[80px] ${OUTLINE}`}>0</li>
          <li className={`w-[117px] ${OUTLINE}`}>1.25</li>
          <li className={`w-[98px] ${OUTLINE}`}>2.5</li>
          <li className={`whitespace-nowrap ${OUTLINE}`}>3.75 公里</li>
        </ol>
        <div className="absolute inset-0 flex items-center pl-[21px]">
          <FruitLogo />
          <span className="pl-1 text-[46px] leading-none font-medium">地圖</span>
          <a href="#legal" className="ml-[33px] text-[27px] leading-none text-[#7d8cbb]/80 underline underline-offset-4">
            法律資訊
          </a>
        </div>
      </div>
      <div className="ml-[9px] flex h-[19px] w-[328px] overflow-hidden rounded-full border-3 border-[#0a1330]">
        <span className="flex-1 bg-[#809bc2]" />
        <span className="flex-1 bg-[#24354a]" />
        <span className="flex-1 bg-[#8a98c3]" />
      </div>
    </div>
  );
}

function FruitLogo() {
  return (
    <svg viewBox="0 0 30 36" className="h-[36px] w-[30px]" aria-hidden="true">
      <path d="M15 10c2 0 4-2 7-2 3 0 5 1 7 4-6 4-5 12 1 15-2 5-5 9-8 9-3 0-4-2-7-2s-4 2-7 2C4 36 0 28 0 20 0 12 5 8 9 8c3 0 4 2 6 2z" fill="#fff" />
      <path d="M15 8c0-4 3-7 7-8 0 4-3 8-7 8z" fill="#fff" />
    </svg>
  );
}

/* ---------- page chrome ---------- */

function StatusBar() {
  return (
    <div className="flex items-center justify-between pt-[66px] pr-[122px] pl-[185px] text-white">
      <time className="text-[54px] leading-[62px] font-semibold">18:17</time>
      <svg viewBox="0 0 262 44" className="h-[44px] w-[262px]" role="img" aria-label="Wi-Fi 及電量">
        <g fill="#3b3b3b">
          <rect x="1" y="31" width="11" height="11" rx="3" />
          <rect x="19" y="31" width="11" height="11" rx="3" />
          <rect x="37" y="31" width="11" height="11" rx="3" />
          <rect x="55" y="31" width="11" height="11" rx="3" />
        </g>
        <g fill="none" stroke="#fff" strokeWidth="9">
          <path d="M92 16a36 36 0 0 1 51 0" />
          <path d="M102 26a22 22 0 0 1 31 0" />
        </g>
        <path d="M109 33q8-8 17 0l-8 9z" fill="#fff" />
        <rect x="170" y="2" width="82" height="40" rx="12" fill="none" stroke="#6a6a6a" strokeWidth="3" />
        <rect x="175" y="7" width="72" height="30" rx="8" fill="#fff" />
        <path d="M257 15q5 2 5 7t-5 7z" fill="#8a8a8a" />
      </svg>
    </div>
  );
}

function RoundButton({ label, children }) {
  return (
    <button type="button" aria-label={label} className="flex size-[105px] items-center justify-center rounded-full border-9 border-[#0a84ff]">
      {children}
    </button>
  );
}

function Segments({ label, options, initial }) {
  const [active, setActive] = useState(initial);
  return (
    <div role="group" aria-label={label} className="flex h-24 flex-1 items-stretch rounded-[26px] bg-[#1c1c1e]">
      {options.map((option, i) => {
        const divided = i > 0 && i !== active && i - 1 !== active;
        return (
          <React.Fragment key={option}>
            <span className={`my-5 w-[2px] shrink-0 rounded-full ${divided ? "bg-[#3a3a3d]" : "bg-transparent"} ${i === 0 ? "hidden" : ""}`} />
            <button
              type="button"
              aria-pressed={i === active}
              onClick={() => setActive(i)}
              className={`my-[6px] mr-2 ml-[6px] min-w-0 flex-1 rounded-[20px] text-[39px] whitespace-pre text-white ${i === active ? "bg-[#5b5a5f] font-medium" : "font-normal"}`}
            >
              {option}
            </button>
          </React.Fragment>
        );
      })}
    </div>
  );
}

const TAB_ICONS = {
  card: (
    <g fill="currentColor">
      <path d="M2 20v-3q0-10 10-10h60q10 0 10 10v3z" />
      <path fillRule="evenodd" d="M2 29h80v26q0 10-10 10h-60q-10 0-10-10zM16 42q-4 0-4 4v6q0 4 4 4h8q4 0 4-4v-6q0-4-4-4z" />
    </g>
  ),
  gauge: (
    <g fill="none" stroke="currentColor">
      <path d="M40 9A34 34 0 0 0 17 65M44 9A34 34 0 0 1 67 65" strokeWidth="14" />
      <path d="M52 34q0-7-10-7t-10 7q0 6 10 8t10 8q0 7-10 7t-10-7M42 23v38" strokeWidth="3" strokeLinecap="round" />
    </g>
  ),
  calendar: (
    <g fill="currentColor">
      <path fillRule="evenodd" d="M18 4h48q10 0 10 10v43q0 10-10 10h-48q-10 0-10-10v-43q0-10 10-10zM18 20q-4 0-4 4v33q0 4 4 4h48q4 0 4-4v-33q0-4-4-4z" />
      {[[34, 27], [46, 27], [57, 27], [23, 38], [34, 38], [46, 38], [57, 38], [23, 49], [34, 49], [46, 49]].map(([x, y]) => (
        <rect key={`${x}-${y}`} x={x} y={y} width="5" height="5" rx="1" />
      ))}
    </g>
  ),
  chart: (
    <g fill="none" stroke="currentColor">
      <path d="M8 6v59h66" strokeWidth="6" strokeLinecap="round" strokeLinejoin="round" />
      <path d="M9 41l19-12 17 13 26-17" strokeWidth="5" />
      <g fill="currentColor" stroke="none">
        <circle cx="29" cy="29" r="6" />
        <circle cx="46" cy="42" r="6" />
        <circle cx="71" cy="26" r="6" />
      </g>
    </g>
  ),
  gear: (
    <g stroke="currentColor" fill="none">
      <circle cx="42" cy="36" r="20" strokeWidth="17" />
      <g fill="currentColor" stroke="none">
        {[0, 45, 90, 135, 180, 225, 270, 315].map((a) => (
          <path key={a} d="M31 10l4-8q1-2 4-2h6q3 0 4 2l4 8z" transform={`rotate(${a} 42 36)`} />
        ))}
      </g>
    </g>
  ),
};

const TABS = [
  { icon: "card", text: "帳戶" },
  { icon: "gauge", text: "預算" },
  { icon: "calendar", text: "今日" },
  { icon: "chart", text: "統計", active: true },
  { icon: "gear", text: "設定" },
];

export default function App() {
  return (
    <div className="flex min-h-screen flex-col bg-black font-[Inter,'Noto_Sans_CJK_TC',sans-serif] text-white">
      <StatusBar />

      <header className="mt-[67px] flex items-center justify-between px-12">
        <h1 className="bg-linear-to-r from-[#ff453a] to-[#ff9f0a] bg-clip-text text-[97px] leading-[105px] font-bold text-transparent">統計</h1>
        <div className="flex gap-[39px]">
          <RoundButton label="貨幣">
            <svg viewBox="0 0 36 60" className="h-[60px] w-[36px]" fill="none" stroke="#0a84ff" strokeLinecap="round" aria-hidden="true">
              <path d="M32 17Q29 6 18 6T4 18Q4 27 18 30T32 43Q32 53 18 53T3 42" strokeWidth="5" />
              <path d="M18 2v55" strokeWidth="4" />
            </svg>
          </RoundButton>
          <RoundButton label="地圖">
            <svg viewBox="0 0 56 54" className="h-[54px] w-[56px]" fill="#30d158" aria-hidden="true">
              <path d="M0 12q0-2 2-3l15-8v45l-13 7q-4 1-4-3zM20 1l15 8v44l-15-8zM39 9l13-8q4-1 4 2v39q0 2-2 3l-15 8z" />
            </svg>
          </RoundButton>
        </div>
      </header>

      <section className="mt-[84px] flex items-center px-12">
        <h2 className="flex w-[564px] shrink-0 gap-2 text-[82px] leading-[96px] font-bold whitespace-nowrap">
          <span>2025</span>
          <span>年</span>
          <span>7</span>
          <span>月</span>
        </h2>
        <Segments label="期間單位" options={["月", "季度", "年"]} initial={0} />
      </section>

      <section className="mt-12 flex items-center px-12">
        <h3 className="w-[139px] shrink-0 text-[56px] leading-[96px] font-bold whitespace-nowrap">最近</h3>
        <Segments label="最近月份" options={["3 個月", "6 個月", "9 個月", "12 個月"]} initial={0} />
      </section>

      <main className="mt-[46px] px-12">
        <div className="relative aspect-[1224/1499] overflow-hidden rounded-[30px]">
          <MapCanvas />
          <button type="button" aria-label="我的位置" className="absolute top-0 left-0 size-[108px] rounded-[26px] bg-[#1c1c1e]">
            <svg viewBox="0 0 108 108" className="size-full" fill="none" stroke="#fff" strokeWidth="5" strokeLinejoin="round" aria-hidden="true">
              <path d="M74 33L29 53q-2 2 1 3h23v22q1 3 3 0L75 36q1-3-1-3z" />
            </svg>
          </button>
          <Compass />
          <MapFooter />
        </div>
      </main>

      <div className="flex-1" />

      <nav className="border-t-2 border-[#1f1f20] pt-[19px]" aria-label="主選單">
        <ul className="grid grid-cols-5">
          {TABS.map((tab) => (
            <li key={tab.text}>
              <a href={`#${tab.icon}`} aria-current={tab.active ? "page" : undefined} className={`flex flex-col items-center ${tab.active ? "text-[#0a84ff]" : "text-[#7f7f7f]"}`}>
                <svg viewBox="0 0 84 72" className="h-[72px] w-[84px]" aria-hidden="true">
                  {TAB_ICONS[tab.icon]}
                </svg>
                <span className="mt-[14px] text-[29px] leading-[40px] font-medium">{tab.text}</span>
              </a>
            </li>
          ))}
        </ul>
        <div className="mx-auto mt-16 mb-6 h-[15px] w-[472px] rounded-full bg-[#303030]" />
      </nav>
    </div>
  );
}
